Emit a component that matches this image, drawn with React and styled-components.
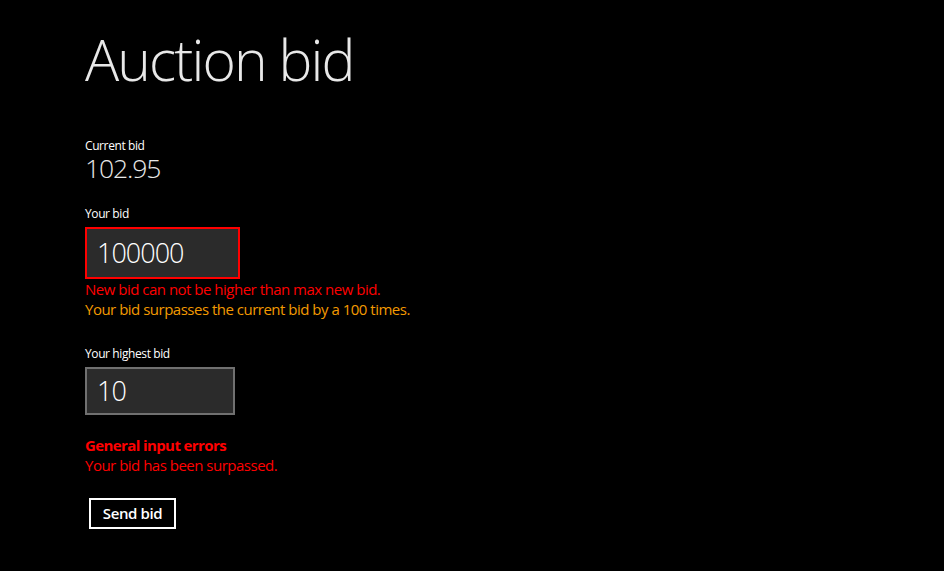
import styled, { createGlobalStyle } from "styled-components";

const GlobalStyle = createGlobalStyle`
  html, body {
    margin: 0;
    padding: 0;
    background: #000;
  }
  body {
    font-family: "Open Sans", "Noto Sans", sans-serif;
    color: #fff;
  }
`;

const Page = styled.div`
  width: 944px;
  height: 571px;
  box-sizing: border-box;
  padding: 25px 0 0 85px;
  background: #000;
  display: flex;
  flex-direction: column;
  align-items: flex-start;
  overflow: hidden;
`;

const Title = styled.h1`
  margin: 0;
  font-size: 57px;
  line-height: 68px;
  font-weight: 300;
  letter-spacing: -1.9px;
  color: #e8e8e8;
`;

const Label = styled.div`
  margin-top: ${(p) => p.$gap}px;
  font-size: 12px;
  line-height: 16px;
  letter-spacing: -0.4px;
  color: #fff;
`;

const Value = styled.div`
  font-size: 26.5px;
  line-height: 28px;
  font-weight: 300;
  letter-spacing: -1.1px;
  color: #e8e8e8;
`;

const Field = styled.input`
  margin-top: 5px;
  box-sizing: border-box;
  width: ${(p) => p.$width}px;
  height: ${(p) => p.$height}px;
  padding: 0 10px 2px;
  background: #2b2b2b;
  border: 2px solid ${(p) => (p.$invalid ? "#ff0000" : "#707070")};
  outline: none;
  font-family: inherit;
  font-size: 27px;
  font-weight: 300;
  letter-spacing: -1px;
  color: #fff;
`;

const Message = styled.div`
  margin-top: ${(p) => p.$gap || 0}px;
  font-size: 15px;
  line-height: 20px;
  font-weight: ${(p) => (p.$bold ? 700 : 400)};
  letter-spacing: ${(p) => (p.$bold ? -0.6 : -0.5)}px;
  color: ${(p) => (p.$warning ? "#f39a00" : "#ff0000")};
`;

const SendButton = styled.button`
  margin: 23px 0 0 4px;
  box-sizing: border-box;
  width: 87px;
  height: 31px;
  padding: 0 0 1px;
  background: transparent;
  border: 2px solid #fff;
  font-family: inherit;
  font-size: 15px;
  font-weight: 600;
  letter-spacing: -0.4px;
  color: #fff;
  cursor: pointer;
`;

const App = () => {
  return (
    <>
      <GlobalStyle />
      <Page>
        <Title>Auction bid</Title>
        <Label $gap={45}>Current bid</Label>
        <Value>102.95</Value>
        <Label $gap={24}>Your bid</Label>
        <Field $width={155} $height={52} $invalid defaultValue="100000" />
        <Message>New bid can not be higher than max new bid.</Message>
        <Message $warning>Your bid surpasses the current bid by a 100 times.</Message>
        <Label $gap={27}>Your highest bid</Label>
        <Field $width={150} $height={48} defaultValue="10" />
        <Message $gap={20} $bold>General input errors</Message>
        <Message>Your bid has been surpassed.</Message>
        <SendButton>Send bid</SendButton>
      </Page>
    </>
  );
};

export default App;
